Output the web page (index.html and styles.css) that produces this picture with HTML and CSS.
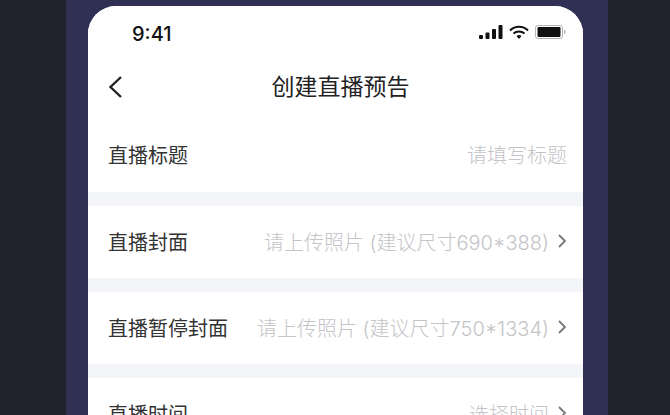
FILE: index.html
```html
<!DOCTYPE html>
<html lang="zh-CN">
<head>
    <meta charset="UTF-8">
    <meta name="viewport" content="width=device-width, initial-scale=1.0">
    <title>创建直播预告</title>
    <link rel="stylesheet" href="styles.css">
</head>
<body>
    <div class="frame">
        <div class="screen">
            <div class="status-bar">
                <span class="time">9:41</span>
                <div class="status-icons">
                    <svg width="24" height="14" viewBox="0 0 24 14">
                        <rect x="0" y="10" width="4" height="4" rx="1" fill="#111"/>
                        <rect x="6.5" y="7.5" width="4" height="6.5" rx="1" fill="#111"/>
                        <rect x="13" y="4" width="4" height="10" rx="1" fill="#111"/>
                        <rect x="19.5" y="0" width="4" height="14" rx="1" fill="#111"/>
                    </svg>
                    <svg width="20" height="15" viewBox="0 0 20 15">
                        <path d="M1 5.5 C6 0.5 14 0.5 19 5.5" fill="none" stroke="#111" stroke-width="2"/>
                        <path d="M4.5 8.5 C7.5 5.8 12.5 5.8 15.5 8.5" fill="none" stroke="#111" stroke-width="2"/>
                        <path d="M7.5 11 L10 14 L12.5 11 C11 9.8 9 9.8 7.5 11 Z" fill="#111"/>
                    </svg>
                    <svg width="31" height="14" viewBox="0 0 31 14">
                        <rect x="0.5" y="0.5" width="27" height="13" rx="2.5" fill="none" stroke="#b4b4b4"/>
                        <rect x="2.5" y="2" width="23" height="10" rx="1.2" fill="#111"/>
                        <rect x="29" y="5" width="1.5" height="4" rx="0.7" fill="#b4b4b4"/>
                    </svg>
                </div>
            </div>

            <div class="nav-bar">
                <svg class="back" width="16" height="26" viewBox="0 0 16 26">
                    <path d="M14 3 L3.5 13 L14 23" fill="none" stroke="#222" stroke-width="2.4"/>
                </svg>
                <h1>创建直播预告</h1>
            </div>

            <div class="row row-first">
                <span class="label">直播标题</span>
                <span class="hint">请填写标题</span>
            </div>
            <div class="row">
                <span class="label">直播封面</span>
                <span class="hint">请上传照片 (建议尺寸690*388)</span>
                <svg class="arrow" width="10" height="16" viewBox="0 0 10 16">
                    <path d="M2 2 L8 8 L2 14" fill="none" stroke="#777" stroke-width="1.8"/>
                </svg>
            </div>
            <div class="row">
                <span class="label">直播暂停封面</span>
                <span class="hint">请上传照片 (建议尺寸750*1334)</span>
                <svg class="arrow" width="10" height="16" viewBox="0 0 10 16">
                    <path d="M2 2 L8 8 L2 14" fill="none" stroke="#777" stroke-width="1.8"/>
                </svg>
            </div>
            <div class="row">
                <span class="label">直播时间</span>
                <span class="hint">选择时间</span>
                <svg class="arrow" width="10" height="16" viewBox="0 0 10 16">
                    <path d="M2 2 L8 8 L2 14" fill="none" stroke="#777" stroke-width="1.8"/>
                </svg>
            </div>
        </div>
    </div>
</body>
</html>
```

FILE: styles.css
```css
html, body {
    height: 415px;
    overflow: hidden;
}
body {
    margin: 0;
    background-color: #22222c;
    font-family: Inter, "Noto Sans CJK SC", sans-serif;
}
.frame {
    width: 495px;
    height: 409px;
    margin-left: 66px;
    padding: 6px 25px 0 22px;
    background-color: #2f3054;
}
.screen {
    height: 409px;
    overflow: hidden;
    background-color: #f4f5f8;
    border-radius: 28px 28px 0 0;
}
.status-bar {
    display: flex;
    justify-content: space-between;
    align-items: center;
    height: 52px;
    padding: 0 17px 0 44px;
    box-sizing: border-box;
    background-color: white;
}
.time {
    margin-top: 4px;
    font-size: 20px;
    font-weight: 500;
    color: #111;
}
.status-icons {
    display: flex;
    align-items: center;
    gap: 6px;
}
.nav-bar {
    position: relative;
    height: 60px;
    padding-bottom: 6px;
    box-sizing: border-box;
    display: flex;
    justify-content: center;
    align-items: center;
    background-color: white;
}
.nav-bar h1 {
    margin: 0 0 0 10px;
    font-size: 23px;
    font-weight: normal;
    color: #222;
}
.back {
    position: absolute;
    left: 19px;
    top: 16px;
}
.row {
    display: flex;
    align-items: center;
    box-sizing: border-box;
    height: 72px;
    margin-bottom: 14px;
    padding: 0 16px 2px 20px;
    background-color: white;
}
.row-first {
    height: 74px;
}
.label {
    font-size: 20px;
    color: #333;
    margin-right: auto;
}
.hint {
    font-size: 20px;
    font-weight: 300;
    color: #c4c4c8;
}
.arrow {
    margin-left: 8px;
}
```
